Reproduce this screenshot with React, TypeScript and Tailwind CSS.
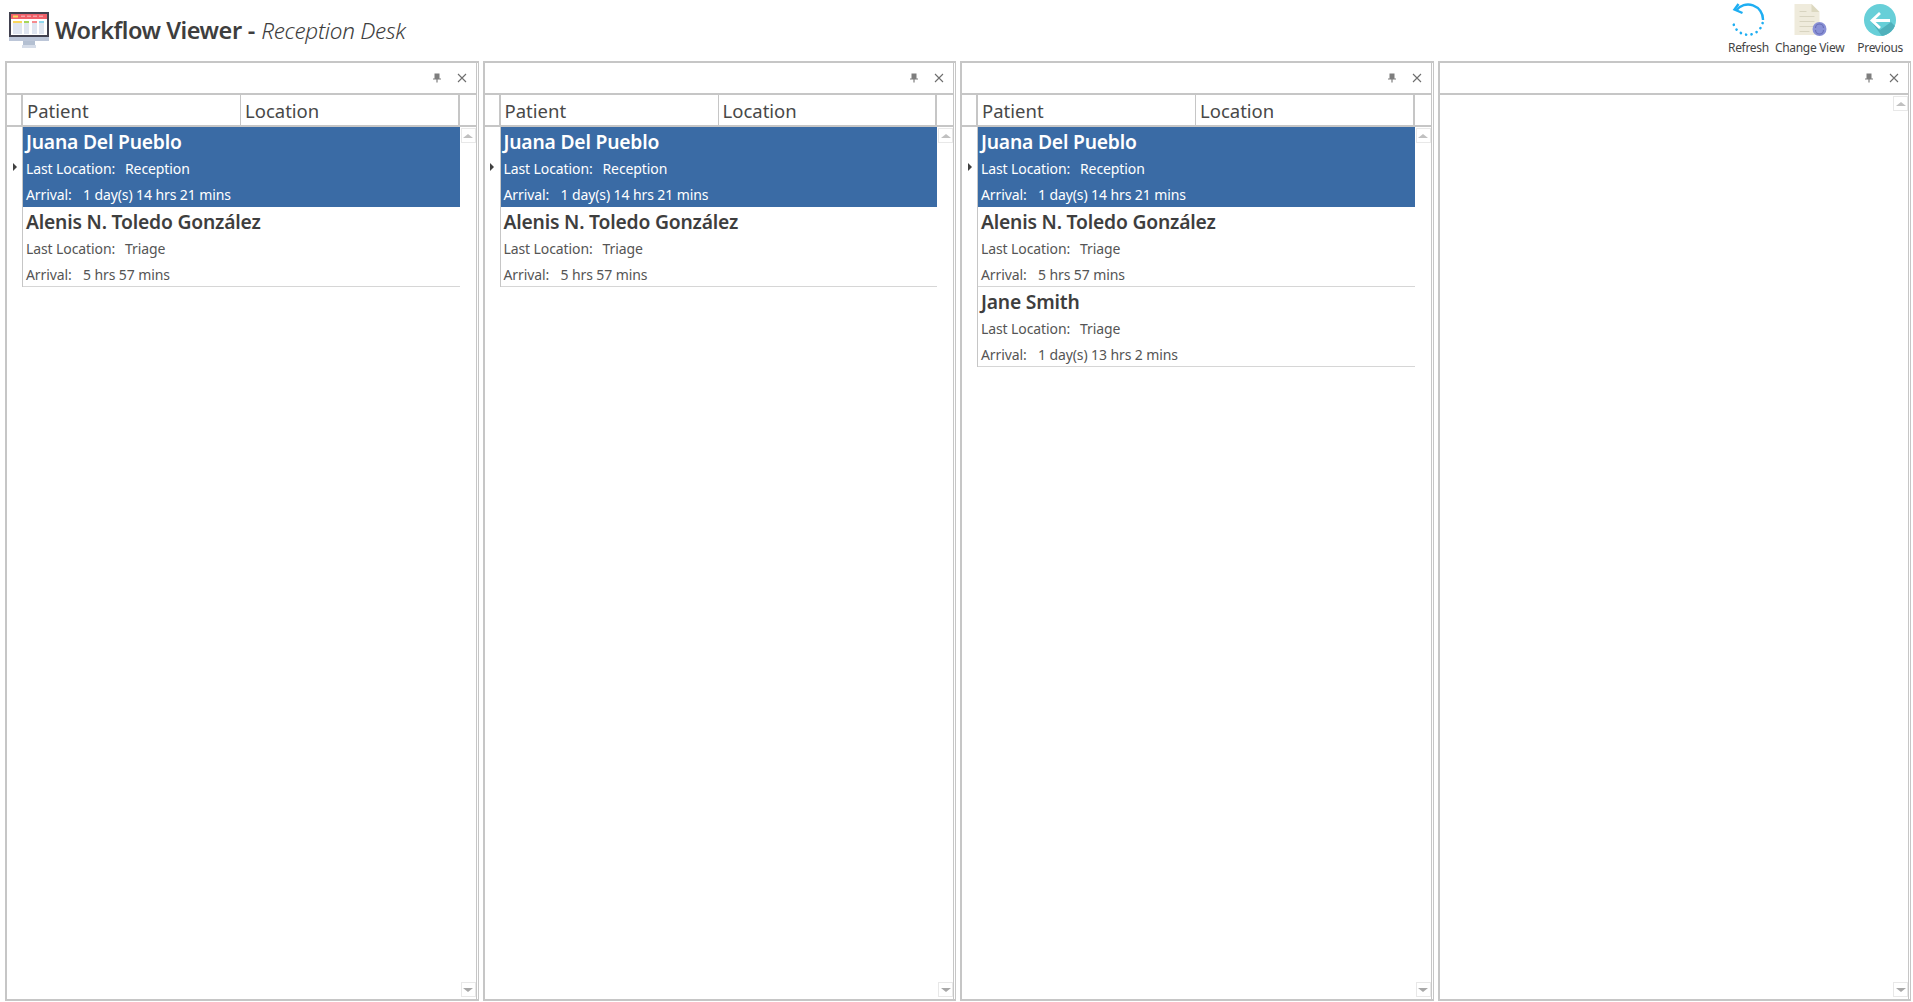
import React from 'react';

type Patient = { name: string; location: string; arrival: string; selected?: boolean };

const juana: Patient = { name: 'Juana Del Pueblo', location: 'Reception', arrival: '1 day(s) 14 hrs 21 mins', selected: true };
const alenis: Patient = { name: 'Alenis N. Toledo González', location: 'Triage', arrival: '5 hrs 57 mins' };
const jane: Patient = { name: 'Jane Smith', location: 'Triage', arrival: '1 day(s) 13 hrs 2 mins' };

const columns: Patient[][] = [[juana, alenis], [juana, alenis], [juana, alenis, jane]];

const MonitorIcon = () => (
  <svg width="40" height="36" viewBox="0 0 40 36" className="shrink-0">
    <rect x="14" y="28" width="12" height="6" fill="#b4c0d2" />
    <rect x="13" y="33" width="14" height="3" fill="#d5dce8" />
    <rect x="0" y="0" width="40" height="25" fill="#41414f" />
    <rect x="0" y="25" width="40" height="4" fill="#bcc6d8" />
    <rect x="2" y="2" width="36" height="21" fill="#ffffff" />
    <rect x="2" y="2" width="36" height="5" fill="#ef5f68" />
    <rect x="4" y="3.5" width="5" height="2" fill="#f9d65c" />
    <rect x="12" y="3.5" width="4" height="1.5" fill="#f4a0a4" />
    <rect x="18" y="3.5" width="4" height="1.5" fill="#f4a0a4" />
    <rect x="24" y="3.5" width="4" height="1.5" fill="#f4a0a4" />
    <rect x="30" y="3.5" width="4" height="1.5" fill="#f4a0a4" />
    <rect x="4" y="9" width="9" height="2" fill="#f9d65c" />
    <rect x="4" y="11" width="9" height="11" fill="#dfe5f0" />
    <rect x="15" y="9" width="5" height="2" fill="#a6d75b" />
    <rect x="15" y="11" width="5" height="11" fill="#dfe5f0" />
    <rect x="23" y="9" width="5" height="2" fill="#f58a8e" />
    <rect x="23" y="11" width="5" height="11" fill="#dfe5f0" />
    <rect x="30" y="9" width="5" height="2" fill="#8fd8f0" />
    <rect x="30" y="11" width="5" height="11" fill="#dfe5f0" />
  </svg>
);

const RefreshIcon = () => (
  <svg width="36" height="34" viewBox="0 0 36 34">
    <path d="M6 7.5 A15 15 0 0 1 33 17" fill="none" stroke="#1eaef2" strokeWidth="2.4" />
    <path d="M8.5 1 L4.5 6.5 L12.5 10" fill="none" stroke="#1eaef2" strokeWidth="2.4" />
    <path d="M32.6 20 A15 15 0 0 1 3 18" fill="none" stroke="#1eaef2" strokeWidth="2.6" strokeLinecap="round" strokeDasharray="0.1 5.4" />
  </svg>
);

const ChangeViewIcon = () => (
  <svg width="34" height="36" viewBox="0 0 34 36">
    <g transform="translate(1.5 1)">
      <path d="M0 0 H17 L25 8 V31 H0 Z" fill="#efebdc" />
      <path d="M17 0 L25 8 H17 Z" fill="#dcd8c0" />
      <rect x="5" y="7" width="7" height="1" fill="#d8d4c0" />
      <rect x="5" y="12" width="15" height="1" fill="#d8d4c0" />
      <rect x="5" y="17" width="15" height="1" fill="#d8d4c0" />
      <rect x="5" y="22" width="15" height="1" fill="#d8d4c0" />
      <rect x="5" y="27" width="10" height="1" fill="#d8d4c0" />
      <circle cx="25" cy="25" r="7" fill="#8a91d6" />
      <path d="M21 24 A4 4 0 0 1 29 24 M29 26 A4 4 0 0 1 21 26" fill="none" stroke="#6a70b8" strokeWidth="1.2" />
    </g>
  </svg>
);

const PreviousIcon = () => (
  <svg width="32" height="33" viewBox="0 0 32 33">
    <defs>
      <clipPath id="prev-clip">
        <circle cx="16" cy="17" r="16" />
      </clipPath>
    </defs>
    <circle cx="16" cy="17" r="16" fill="#67cfd8" />
    <path d="M7 18 L16 27 L27 19 L36 28 L20 36 Z" fill="#4fb0bb" clipPath="url(#prev-clip)" />
    <path d="M16 10 L8 17.5 L16 25 M8.5 17.5 H26" fill="none" stroke="#ffffff" strokeWidth="2.8" />
  </svg>
);

const ToolButton = ({ label, icon, className }: { label: string; icon: React.ReactNode; className?: string }) => (
  <div className={`flex flex-col items-center ${className ?? ''}`}>
    <div className="h-[36px] flex items-start">{icon}</div>
    <span className="text-[12px] leading-[16px] mt-[1px] text-[#444444] whitespace-nowrap tracking-[-0.3px]">{label}</span>
  </div>
);

const ScrollBar = () => (
  <div className="w-[16px] shrink-0 flex flex-col justify-between items-end pb-[2px] pt-[1px]">
    <div className="w-[15px] h-[15px] border border-[#e8e8e8] flex items-center justify-center">
      <div className="w-0 h-0 border-x-[5px] border-x-transparent border-b-[4px] border-b-[#c0c0c0]" />
    </div>
    <div className="w-[15px] h-[15px] border border-[#e8e8e8] flex items-center justify-center">
      <div className="w-0 h-0 border-x-[5px] border-x-transparent border-t-[4px] border-t-[#a8a8a8]" />
    </div>
  </div>
);

const PatientRow = ({ p }: { p: Patient }) => (
  <div className={`h-[80px] pl-[3px] flex flex-col ${p.selected ? 'bg-[#3a6ba5] text-white' : 'border-b border-[#d6d6d6] text-[#555555]'}`}>
    <div className={`h-[28px] pt-[2px] text-[19.3px] leading-[26px] font-semibold tracking-[-0.2px] whitespace-nowrap ${p.selected ? 'text-white' : 'text-[#3e3e3e]'}`}>{p.name}</div>
    <div className="h-[26px] text-[14px] leading-[27px] tracking-[-0.1px] flex whitespace-nowrap">
      <span className="w-[99px]">Last Location:</span>
      <span>{p.location}</span>
    </div>
    <div className="h-[26px] text-[14px] leading-[27px] tracking-[-0.1px] flex whitespace-nowrap">
      <span className="w-[57px]">Arrival:</span>
      <span>{p.arrival}</span>
    </div>
  </div>
);

const PanelHeader = () => (
  <div className="h-[32px] shrink-0 flex items-center justify-end gap-[15px] pr-[9px] border-b-2 border-[#c6c6c6]">
    <svg width="10" height="10" viewBox="0 0 10 10">
      <path d="M2.5 0.5 H7.5 V5.5 H9 V6.5 H5.6 V9.5 H4.4 V6.5 H1 V5.5 H2.5 Z" fill="#7e7e7e" />
    </svg>
    <svg width="10" height="10" viewBox="0 0 10 10">
      <path d="M1 1 L9 9 M9 1 L1 9" stroke="#6e6e6e" strokeWidth="1.1" fill="none" />
    </svg>
  </div>
);

const Panel = ({ rows }: { rows?: Patient[] }) => (
  <div className="flex flex-col min-h-0 border-y-2 border-l-2 border-r border-[#c6c6c6] pr-[1px]">
    <div className="flex flex-col flex-1 min-h-0 border-r border-[#c6c6c6]">
      <PanelHeader />
      {rows ? (
        <div className="flex flex-col flex-1 min-h-0">
          <div className="h-[32px] shrink-0 flex border-b-2 border-[#c6c6c6] text-[18.5px] leading-[32px] text-[#484848]">
            <div className="w-[16px] shrink-0 border-r-2 border-[#c6c6c6]" />
            <div className="w-[218px] shrink-0 pl-[4px] border-r border-[#c6c6c6]">Patient</div>
            <div className="flex-1 pl-[4px] border-r-2 border-[#c6c6c6]">Location</div>
            <div className="w-[16px] shrink-0" />
          </div>
          <div className="flex flex-1 min-h-0">
            <div className="w-[15px] shrink-0 h-[80px] flex items-center justify-center">
              <div className="w-0 h-0 border-y-[4px] border-y-transparent border-l-[4px] border-l-[#404040]" />
            </div>
            <div className="flex-1 min-w-0">
              <div className="border-l border-[#c6c6c6]">
                {rows.map((p) => (
                  <PatientRow key={p.name} p={p} />
                ))}
              </div>
            </div>
            <ScrollBar />
          </div>
        </div>
      ) : (
        <div className="flex flex-1 justify-end min-h-0">
          <ScrollBar />
        </div>
      )}
    </div>
  </div>
);

export default function App() {
  return (
    <div className="h-[1002px] w-[1913px] bg-white flex flex-col overflow-hidden font-['Noto_Sans','Open_Sans',sans-serif]">
      <div className="h-[61px] shrink-0 flex items-start justify-between">
        <div className="flex items-start pl-[9px] pt-[12px]">
          <MonitorIcon />
          <div className="ml-[6px] mt-[1px] h-[36px] flex items-center whitespace-nowrap text-[#3e3e3e]">
            <span className="text-[23.5px] font-semibold tracking-[-0.47px]">Workflow Viewer</span>
            <span className="text-[23.5px] font-semibold ml-[6px]">-</span>
            <span className="text-[22.5px] italic font-light ml-[6px] tracking-[-0.28px]">Reception Desk</span>
          </div>
        </div>
        <div className="flex items-start pt-[3px] pr-[10px]">
          <ToolButton label="Refresh" icon={<RefreshIcon />} />
          <ToolButton label="Change View" className="ml-[6px]" icon={<ChangeViewIcon />} />
          <ToolButton label="Previous" className="ml-[13px]" icon={<PreviousIcon />} />
        </div>
      </div>
      <div className="grid grid-cols-4 gap-[4px] pl-[5px] pr-[2px] pb-[1px] flex-1 min-h-0">
        {columns.map((rows, i) => (
          <Panel key={i} rows={rows} />
        ))}
        <Panel />
      </div>
    </div>
  );
}
